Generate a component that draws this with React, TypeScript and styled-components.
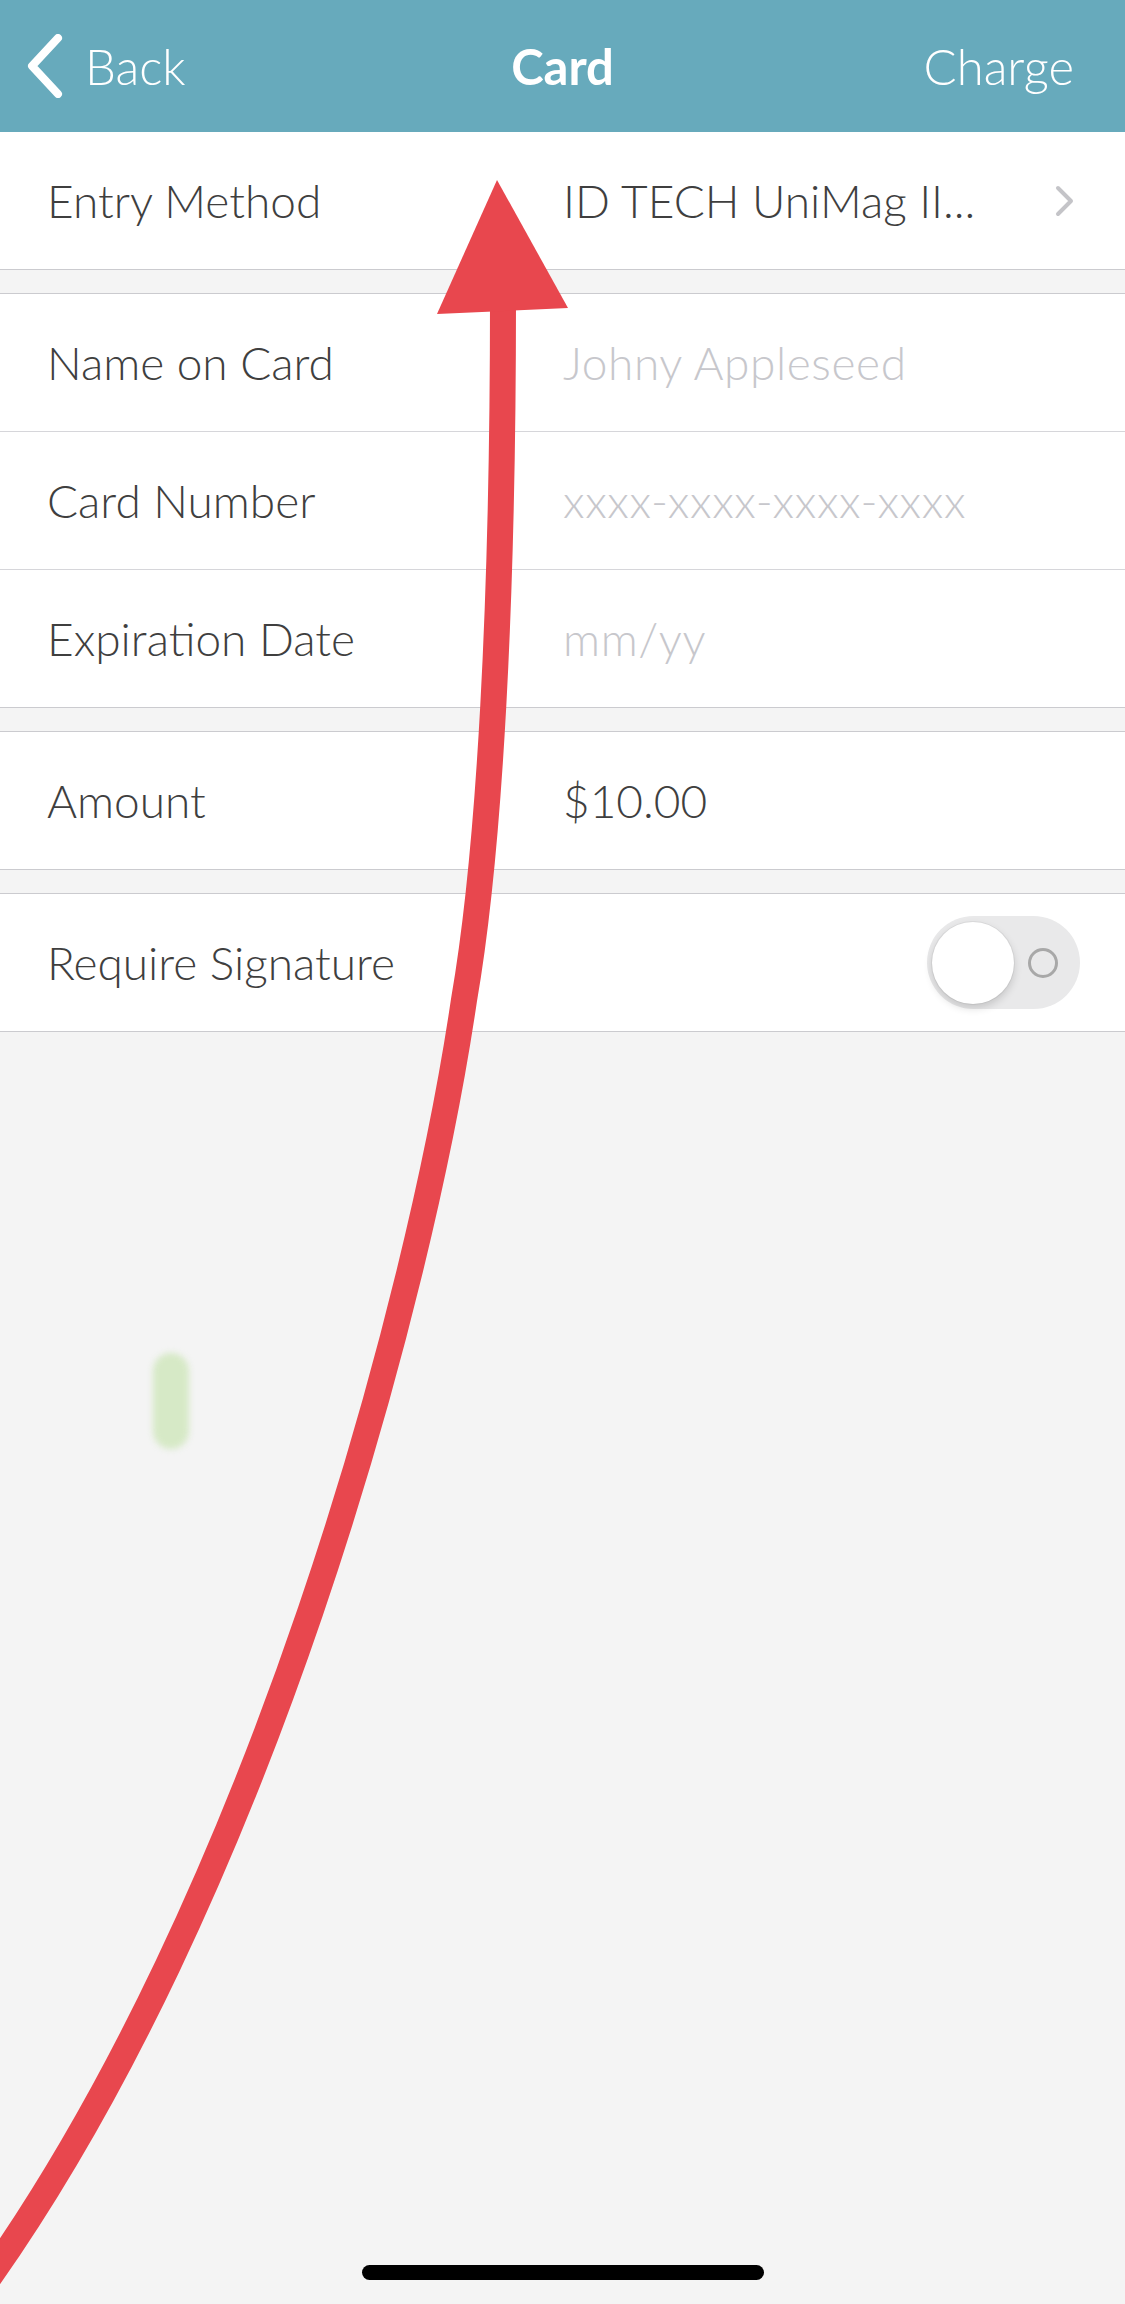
import React from "react";
import styled, { createGlobalStyle } from "styled-components";

const GlobalStyle = createGlobalStyle`
  html, body {
    margin: 0;
    padding: 0;
    background: #f4f4f4;
  }
  body {
    font-family: Lato, "Open Sans", "Liberation Sans", sans-serif;
    -webkit-font-smoothing: antialiased;
  }
`;

const Screen = styled.div`
  position: relative;
  width: 1125px;
  min-height: 2304px;
  display: flex;
  flex-direction: column;
  background: #f4f4f4;
  overflow: hidden;
`;

const NavBar = styled.header`
  height: 132px;
  background: #67aabc;
  display: grid;
  grid-template-columns: 1fr auto 1fr;
  align-items: center;
  padding: 0 51px;
  color: #fff;
  font-size: 49px;
`;

const NavButton = styled.div<{ $align?: "left" | "right" }>`
  display: flex;
  align-items: center;
  gap: 22px;
  justify-self: ${(p) => (p.$align === "right" ? "end" : "start")};
  margin-left: ${(p) => (p.$align === "right" ? "0" : "-24px")};
  font-weight: 300;
  line-height: 1;
`;

const NavTitle = styled.div`
  font-weight: 700;
  line-height: 1;
`;

const Group = styled.section<{ $first?: boolean }>`
  background: #fff;
  border-top: ${(p) => (p.$first ? "none" : "1px solid #cbcbcf")};
  border-bottom: 1px solid #cbcbcf;
  margin-bottom: 23px;
`;

const Row = styled.div`
  height: 137px;
  display: grid;
  grid-template-columns: 516px 1fr auto;
  align-items: center;
  padding: 0 45px 0 47px;
  font-size: 46px;
  font-weight: 300;
  color: #3f3f3f;

  & + & {
    border-top: 1px solid #d6d6da;
  }
`;

const Label = styled.span`
  line-height: 1;
`;

const Value = styled.span<{ $placeholder?: boolean }>`
  line-height: 1;
  color: ${(p) => (p.$placeholder ? "#c7c7cc" : "#3f3f3f")};
  letter-spacing: ${(p) => (p.$placeholder ? "0.6px" : "0")};
  white-space: nowrap;
`;

const Disclosure = styled.span`
  display: flex;
  padding-right: 5px;
`;

const Switch = styled.div`
  width: 153px;
  height: 93px;
  box-sizing: border-box;
  border-radius: 47px;
  background: #e9e9ea;
  display: flex;
  align-items: center;
  padding-left: 5px;
`;

const Knob = styled.div`
  width: 82px;
  height: 82px;
  border-radius: 50%;
  background: #fff;
  box-shadow: 0 4px 9px rgba(0, 0, 0, 0.16), 0 0 0 1px rgba(0, 0, 0, 0.05);
`;

const OffMark = styled.div`
  width: 24px;
  height: 24px;
  margin-left: 14px;
  border-radius: 50%;
  border: 3px solid #a8a8a8;
`;

const Empty = styled.div`
  flex: 1;
  position: relative;
  display: flex;
  flex-direction: column;
  justify-content: flex-end;
  align-items: center;
  padding-bottom: 24px;
`;

const Smudge = styled.div`
  position: absolute;
  left: 153px;
  top: 298px;
  width: 36px;
  height: 96px;
  border-radius: 18px;
  background: #d6e9c6;
  filter: blur(3px);
`;

const HomeIndicator = styled.div`
  width: 402px;
  height: 15px;
  border-radius: 8px;
  background: #000;
`;

const Annotation = styled.svg`
  position: absolute;
  top: 0;
  left: 0;
  pointer-events: none;
`;

const rows = [
  [
    { label: "Name on Card", value: "Johny Appleseed", placeholder: true },
    { label: "Card Number", value: "xxxx-xxxx-xxxx-xxxx", placeholder: true },
    { label: "Expiration Date", value: "mm/yy", placeholder: true },
  ],
  [{ label: "Amount", value: "$10.00", placeholder: false }],
];

const App: React.FC = () => (
  <Screen>
    <GlobalStyle />
    <NavBar>
      <NavButton>
        <svg width="36" height="64" viewBox="0 0 36 64">
          <path
            d="M31 4L5 32l26 28"
            fill="none"
            stroke="#fff"
            strokeWidth="8"
            strokeLinecap="round"
            strokeLinejoin="round"
          />
        </svg>
        Back
      </NavButton>
      <NavTitle>Card</NavTitle>
      <NavButton $align="right">Charge</NavButton>
    </NavBar>

    <Group $first>
      <Row>
        <Label>Entry Method</Label>
        <Value>ID TECH UniMag II...</Value>
        <Disclosure>
          <svg width="20" height="32" viewBox="0 0 20 32">
            <path
              d="M3 3l13 13L3 29"
              fill="none"
              stroke="#c4c4c8"
              strokeWidth="4"
              strokeLinecap="round"
              strokeLinejoin="round"
            />
          </svg>
        </Disclosure>
      </Row>
    </Group>

    {rows.map((group, i) => (
      <Group key={i}>
        {group.map((r) => (
          <Row key={r.label}>
            <Label>{r.label}</Label>
            <Value $placeholder={r.placeholder}>{r.value}</Value>
          </Row>
        ))}
      </Group>
    ))}

    <Group>
      <Row>
        <Label>Require Signature</Label>
        <span />
        <Switch>
          <Knob />
          <OffMark />
        </Switch>
      </Row>
    </Group>

    <Empty>
      <Smudge />
      <HomeIndicator />
    </Empty>

    <Annotation width="1125" height="2304" viewBox="0 0 1125 2304">
      <path
        d="M503 300 C503 600 490 850 464 1000 C420 1300 260 1900 -20 2290"
        fill="none"
        stroke="#e8474e"
        strokeWidth="26"
      />
      <polygon points="497,180 568,308 437,314" fill="#e8474e" />
    </Annotation>
  </Screen>
);

export default App;
